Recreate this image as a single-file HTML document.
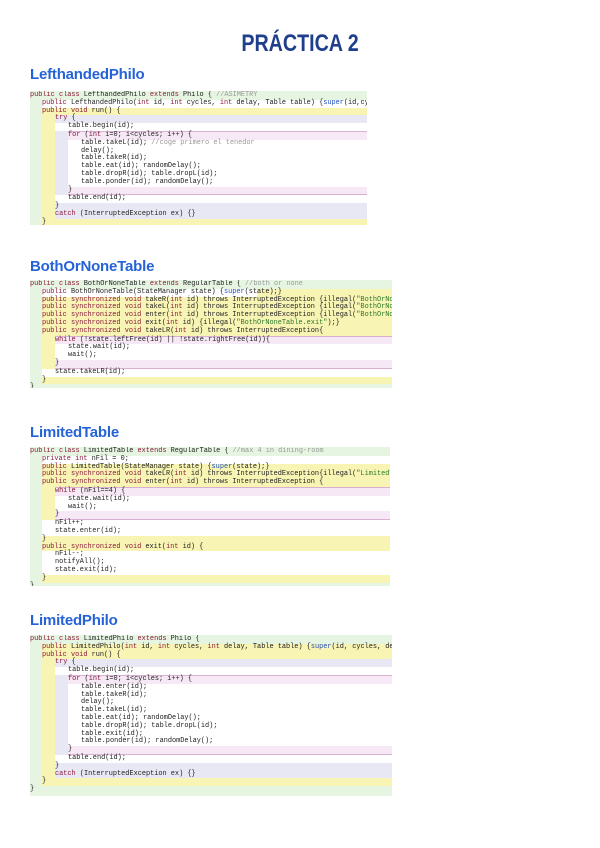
<!DOCTYPE html>
<html><head><meta charset="utf-8"><style>
*{margin:0;padding:0;box-sizing:border-box}
body{width:600px;height:848px;background:#fff;position:relative;overflow:hidden;font-family:"Liberation Sans",sans-serif}
.t{position:absolute;font-weight:bold;color:#2563d6;font-size:15px;letter-spacing:-0.2px}
.main{position:absolute;left:0;width:600px;top:30px;text-align:center;font-weight:bold;color:#1f3f8c;font-size:24px;transform:scaleX(0.82)}
.c{position:absolute;font-family:"Liberation Mono",monospace;font-size:6.9px;line-height:7.8px;color:#222;white-space:nowrap;overflow:hidden;padding-top:1px}
.c div{line-height:7.8px}
.g{background:#e6f4e2}
.y{background:#f8f4b4;margin-left:12px}
.w{background:#fff}
.l{background:#e8e8f4;margin-left:13px}
.p{background:#f6e8f4;margin-left:13px;border-top:1px solid #d8b0d0;border-bottom:1px solid #d8b0d0}
.i{padding-left:13px}
.k{color:#8a1a3a}
.s{color:#2a7a2a}
.m{color:#999}
.b{color:#2050c0}
</style></head><body>
<div class="main">PRÁCTICA 2</div>

<div class="t" style="left:30px;top:66px">LefthandedPhilo</div>
<div class="c g" style="left:30px;top:91px;width:337px;height:134px">
<div><span class="k">public class</span> LefthandedPhilo <span class="k">extends</span> Philo { <span class="m">//ASIMETRY</span></div>
<div class="y">
<div class="w"><span class="k">public</span> LefthandedPhilo(<span class="k">int</span> id, <span class="k">int</span> cycles, <span class="k">int</span> delay, Table table) {<span class="b">super</span>(id,cycles,delay,table);}</div>
<div><span class="k">public void</span> run() {</div>
<div class="l">
<div><span class="k">try</span> {</div>
<div class="w i">table.begin(id);</div>
<div class="p" style="margin-left:13px">
<div><span class="k">for</span> (<span class="k">int</span> i=0; i&lt;cycles; i++) {</div>
<div class="w i">table.takeL(id); <span class="m">//coge primero el tenedor</span><br>delay();<br>table.takeR(id);<br>table.eat(id); randomDelay();<br>table.dropR(id); table.dropL(id);<br>table.ponder(id); randomDelay();</div>
<div>}</div>
</div>
<div class="w i">table.end(id);</div>
<div>}</div>
<div><span class="k">catch</span> (InterruptedException ex) {}</div>
</div>
<div>}</div>
</div>
<div>}</div>
</div>

<div class="t" style="left:30px;top:258px">BothOrNoneTable</div>
<div class="c g" style="left:30px;top:280px;width:362px;height:108px">
<div><span class="k">public class</span> BothOrNoneTable <span class="k">extends</span> RegularTable { <span class="m">//both or none</span></div>
<div class="y">
<div class="w" style="width:215px"><span class="k">public</span> BothOrNoneTable(StateManager state) {<span class="b">super</span>(state);}</div>
<div><span class="k">public synchronized void</span> takeR(<span class="k">int</span> id) throws InterruptedException {illegal(<span class="s">"BothOrNoneTable.takeR"</span>);}</div>
<div><span class="k">public synchronized void</span> takeL(<span class="k">int</span> id) throws InterruptedException {illegal(<span class="s">"BothOrNoneTable.takeL"</span>);}</div>
<div><span class="k">public synchronized void</span> enter(<span class="k">int</span> id) throws InterruptedException {illegal(<span class="s">"BothOrNoneTable.enter"</span>);}</div>
<div><span class="k">public synchronized void</span> exit(<span class="k">int</span> id) {illegal(<span class="s">"BothOrNoneTable.exit"</span>);}</div>
<div><span class="k">public synchronized void</span> takeLR(<span class="k">int</span> id) throws InterruptedException{</div>
<div class="p" style="margin-left:13px">
<div><span class="k">while</span> (!state.leftFree(id) || !state.rightFree(id)){</div>
<div class="w i">state.wait(id);<br>wait();</div>
<div>}</div>
</div>
<div class="w i">state.takeLR(id);</div>
<div>}</div>
</div>
<div>}</div>
</div>

<div class="t" style="left:30px;top:424px">LimitedTable</div>
<div class="c g" style="left:30px;top:447px;width:360px;height:139px">
<div><span class="k">public class</span> LimitedTable <span class="k">extends</span> RegularTable { <span class="m">//max 4 in dining-room</span></div>
<div class="y">
<div class="w"><span class="k">private int</span> nFil = 0;</div>
<div><span class="k">public</span> LimitedTable(StateManager state) {<span class="b">super</span>(state);}</div>
<div><span class="k">public synchronized void</span> takeLR(<span class="k">int</span> id) throws InterruptedException{illegal(<span class="s">"LimitedTable.takeLR"</span>);}</div>
<div><span class="k">public synchronized void</span> enter(<span class="k">int</span> id) throws InterruptedException {</div>
<div class="p" style="margin-left:13px">
<div><span class="k">while</span> (nFil==4) {</div>
<div class="w i">state.wait(id);<br>wait();</div>
<div>}</div>
</div>
<div class="w i">nFil++;<br>state.enter(id);</div>
<div>}</div>
<div><span class="k">public synchronized void</span> exit(<span class="k">int</span> id) {</div>
<div class="w i">nFil--;<br>notifyAll();<br>state.exit(id);</div>
<div>}</div>
</div>
<div>}</div>
</div>

<div class="t" style="left:30px;top:612px">LimitedPhilo</div>
<div class="c g" style="left:30px;top:635px;width:362px;height:161px">
<div><span class="k">public class</span> LimitedPhilo <span class="k">extends</span> Philo {</div>
<div class="y">
<div><span class="k">public</span> LimitedPhilo(<span class="k">int</span> id, <span class="k">int</span> cycles, <span class="k">int</span> delay, Table table) {<span class="b">super</span>(id, cycles, delay, table);}</div>
<div><span class="k">public void</span> run() {</div>
<div class="l">
<div><span class="k">try</span> {</div>
<div class="w i">table.begin(id);</div>
<div class="p" style="margin-left:13px">
<div><span class="k">for</span> (<span class="k">int</span> i=0; i&lt;cycles; i++) {</div>
<div class="w i">table.enter(id);<br>table.takeR(id);<br>delay();<br>table.takeL(id);<br>table.eat(id); randomDelay();<br>table.dropR(id); table.dropL(id);<br>table.exit(id);<br>table.ponder(id); randomDelay();</div>
<div>}</div>
</div>
<div class="w i">table.end(id);</div>
<div>}</div>
<div><span class="k">catch</span> (InterruptedException ex) {}</div>
</div>
<div>}</div>
</div>
<div>}</div>
</div>
</body></html>
